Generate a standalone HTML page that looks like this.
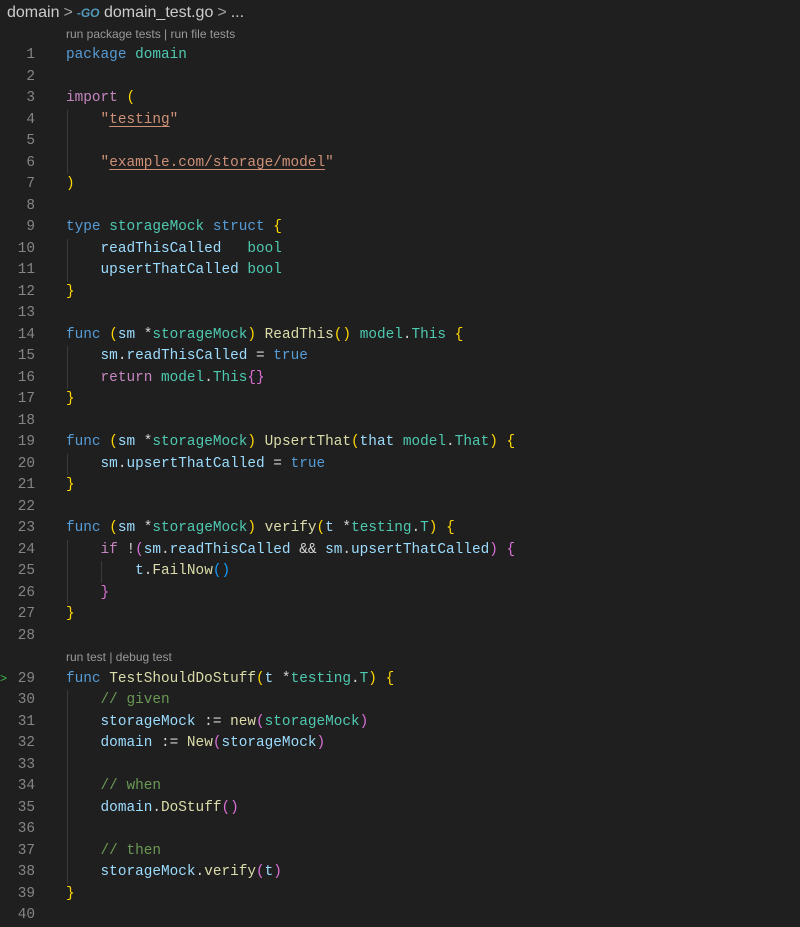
<!DOCTYPE html>
<html><head><meta charset="utf-8"><style>
html,body{margin:0;padding:0;background:#1f1f1f;width:800px;height:925px;overflow:hidden}
.bc{position:absolute;left:7px;top:4px;font:16px "Liberation Sans",sans-serif;color:#cccccc;white-space:nowrap}
.bc .sep{color:#a0a0a0;margin:0 4px}
.lens{position:absolute;left:66px;font:12px "Liberation Sans",sans-serif;color:#999;white-space:nowrap}
.ln{position:absolute;width:35px;text-align:right;left:0;font:14.4px "Liberation Mono",monospace;color:#858585;height:21.5px;line-height:21.5px}
.cl{position:absolute;left:66px;font:14.4px "Liberation Mono",monospace;color:#d4d4d4;white-space:pre;height:21.5px;line-height:21.5px}
.k{color:#569cd6}.t{color:#4ec9b0}.p{color:#c586c0}.s{color:#ce9178}.su{color:#ce9178;text-decoration:underline;text-decoration-color:#ce9178;text-underline-offset:3px}
.f{color:#dcdcaa}.v{color:#9cdcfe}.b1{color:#ffd700}.b2{color:#da70d6}.b3{color:#179fff}.c{color:#6a9955}
.g{position:absolute;width:1px;background:#3a3a3a}
</style></head><body>
<div class="bc">domain<span class="sep">&gt;</span><span style="color:#519aba;font-size:12px;font-weight:bold;font-style:italic">-GO</span> domain_test.go<span class="sep">&gt;</span>...</div>
<div class="lens" style="top:27px">run package tests | run file tests</div>
<div class="lens" style="top:650px">run test | debug test</div>
<div id="code"></div>
<div style="position:absolute;left:0;top:671px;color:#3fb950;font:12px 'Liberation Sans',sans-serif">&gt;</div>
<script>
var L=[
'<span class="k">package</span> <span class="t">domain</span>',
'',
'<span class="p">import</span> <span class="b1">(</span>',
'    <span class="s">"</span><span class="su">testing</span><span class="s">"</span>',
'',
'    <span class="s">"</span><span class="su">example.com/storage/model</span><span class="s">"</span>',
'<span class="b1">)</span>',
'',
'<span class="k">type</span> <span class="t">storageMock</span> <span class="k">struct</span> <span class="b1">{</span>',
'    <span class="v">readThisCalled</span>   <span class="t">bool</span>',
'    <span class="v">upsertThatCalled</span> <span class="t">bool</span>',
'<span class="b1">}</span>',
'',
'<span class="k">func</span> <span class="b1">(</span><span class="v">sm</span> *<span class="t">storageMock</span><span class="b1">)</span> <span class="f">ReadThis</span><span class="b1">()</span> <span class="t">model</span>.<span class="t">This</span> <span class="b1">{</span>',
'    <span class="v">sm</span>.<span class="v">readThisCalled</span> = <span class="k">true</span>',
'    <span class="p">return</span> <span class="t">model</span>.<span class="t">This</span><span class="b2">{}</span>',
'<span class="b1">}</span>',
'',
'<span class="k">func</span> <span class="b1">(</span><span class="v">sm</span> *<span class="t">storageMock</span><span class="b1">)</span> <span class="f">UpsertThat</span><span class="b1">(</span><span class="v">that</span> <span class="t">model</span>.<span class="t">That</span><span class="b1">)</span> <span class="b1">{</span>',
'    <span class="v">sm</span>.<span class="v">upsertThatCalled</span> = <span class="k">true</span>',
'<span class="b1">}</span>',
'',
'<span class="k">func</span> <span class="b1">(</span><span class="v">sm</span> *<span class="t">storageMock</span><span class="b1">)</span> <span class="f">verify</span><span class="b1">(</span><span class="v">t</span> *<span class="t">testing</span>.<span class="t">T</span><span class="b1">)</span> <span class="b1">{</span>',
'    <span class="p">if</span> !<span class="b2">(</span><span class="v">sm</span>.<span class="v">readThisCalled</span> &amp;&amp; <span class="v">sm</span>.<span class="v">upsertThatCalled</span><span class="b2">)</span> <span class="b2">{</span>',
'        <span class="v">t</span>.<span class="f">FailNow</span><span class="b3">()</span>',
'    <span class="b2">}</span>',
'<span class="b1">}</span>',
'',
'<span class="k">func</span> <span class="f">TestShouldDoStuff</span><span class="b1">(</span><span class="v">t</span> *<span class="t">testing</span>.<span class="t">T</span><span class="b1">)</span> <span class="b1">{</span>',
'    <span class="c">// given</span>',
'    <span class="v">storageMock</span> := <span class="f">new</span><span class="b2">(</span><span class="t">storageMock</span><span class="b2">)</span>',
'    <span class="v">domain</span> := <span class="f">New</span><span class="b2">(</span><span class="v">storageMock</span><span class="b2">)</span>',
'',
'    <span class="c">// when</span>',
'    <span class="v">domain</span>.<span class="f">DoStuff</span><span class="b2">()</span>',
'',
'    <span class="c">// then</span>',
'    <span class="v">storageMock</span>.<span class="f">verify</span><span class="b2">(</span><span class="v">t</span><span class="b2">)</span>',
'<span class="b1">}</span>',
''];
var lh=21.5,h='';
function yy(n){return 45.25+(n-1)*lh+(n>=29?lh:0);}
for(var i=0;i<L.length;i++){var n=i+1,y=yy(n);
h+='<div class="ln" style="top:'+y+'px">'+n+'</div><div class="cl" style="top:'+y+'px">'+L[i]+'</div>';}
function guide(x,a,b){h+='<div class="g" style="left:'+x+'px;top:'+yy(a)+'px;height:'+(yy(b)+lh-yy(a))+'px"></div>';}
guide(67,4,6);guide(67,10,11);guide(67,15,16);guide(67,20,20);guide(67,24,26);guide(101,25,25);guide(67,30,38);
document.getElementById('code').innerHTML=h;
</script>
</body></html>
